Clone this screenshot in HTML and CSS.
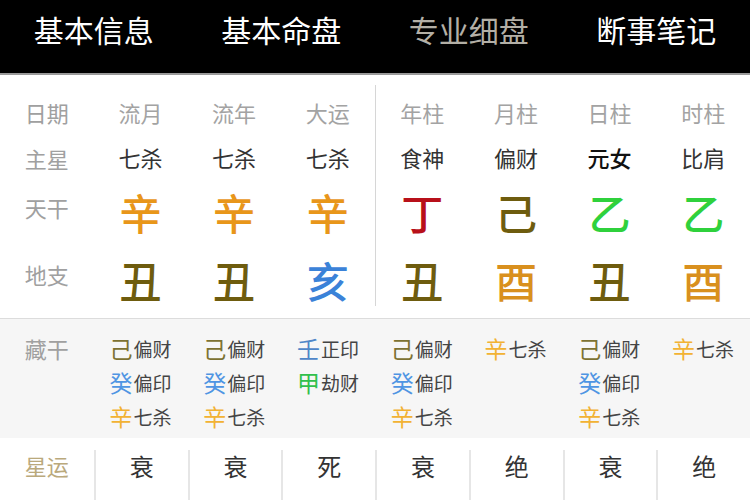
FILE: index.html
```html
<!DOCTYPE html>
<html lang="zh-CN">
<head>
    <meta charset="UTF-8">
    <meta name="viewport" content="width=device-width, initial-scale=1.0">
    <title>专业细盘</title>
    <link rel="stylesheet" href="styles.css">
</head>
<body>
    <header class="tabs">
        <div class="tab">基本信息</div>
        <div class="tab">基本命盘</div>
        <div class="tab active">专业细盘</div>
        <div class="tab">断事笔记</div>
    </header>

    <section class="pillars">
        <div class="half left">
            <div class="cell head label">日期</div>
            <div class="cell head">流月</div>
            <div class="cell head">流年</div>
            <div class="cell head">大运</div>

            <div class="cell label">主星</div>
            <div class="cell star">七杀</div>
            <div class="cell star">七杀</div>
            <div class="cell star">七杀</div>

            <div class="cell label stem-label">天干</div>
            <div class="cell big orange">辛</div>
            <div class="cell big orange">辛</div>
            <div class="cell big orange">辛</div>

            <div class="cell label branch-label">地支</div>
            <div class="cell big olive branch">丑</div>
            <div class="cell big olive branch">丑</div>
            <div class="cell big blue branch">亥</div>
        </div>
        <div class="half right">
            <div class="cell head">年柱</div>
            <div class="cell head">月柱</div>
            <div class="cell head">日柱</div>
            <div class="cell head">时柱</div>

            <div class="cell star">食神</div>
            <div class="cell star">偏财</div>
            <div class="cell star self">元女</div>
            <div class="cell star">比肩</div>

            <div class="cell big red">丁</div>
            <div class="cell big olive">己</div>
            <div class="cell big green">乙</div>
            <div class="cell big green">乙</div>

            <div class="cell big olive branch">丑</div>
            <div class="cell big orange branch">酉</div>
            <div class="cell big olive branch">丑</div>
            <div class="cell big orange branch">酉</div>
        </div>
    </section>

    <section class="hidden">
        <div class="col label">藏干</div>
        <div class="col">
            <div class="item"><span class="gan olive">己</span>偏财</div>
            <div class="item"><span class="gan blue">癸</span>偏印</div>
            <div class="item"><span class="gan yellow">辛</span>七杀</div>
        </div>
        <div class="col">
            <div class="item"><span class="gan olive">己</span>偏财</div>
            <div class="item"><span class="gan blue">癸</span>偏印</div>
            <div class="item"><span class="gan yellow">辛</span>七杀</div>
        </div>
        <div class="col">
            <div class="item"><span class="gan steel">壬</span>正印</div>
            <div class="item"><span class="gan green">甲</span>劫财</div>
        </div>
        <div class="col">
            <div class="item"><span class="gan olive">己</span>偏财</div>
            <div class="item"><span class="gan blue">癸</span>偏印</div>
            <div class="item"><span class="gan yellow">辛</span>七杀</div>
        </div>
        <div class="col">
            <div class="item"><span class="gan yellow">辛</span>七杀</div>
        </div>
        <div class="col">
            <div class="item"><span class="gan olive">己</span>偏财</div>
            <div class="item"><span class="gan blue">癸</span>偏印</div>
            <div class="item"><span class="gan yellow">辛</span>七杀</div>
        </div>
        <div class="col">
            <div class="item"><span class="gan yellow">辛</span>七杀</div>
        </div>
    </section>

    <section class="luck">
        <div class="slot label">星运</div>
        <div class="slot">衰</div>
        <div class="slot">衰</div>
        <div class="slot">死</div>
        <div class="slot">衰</div>
        <div class="slot">绝</div>
        <div class="slot">衰</div>
        <div class="slot">绝</div>
    </section>
</body>
</html>
```

FILE: styles.css
```css
body {
    margin: 0;
    font-family: "Noto Sans CJK SC", "Noto Sans", sans-serif;
    background-color: #fff;
    color: #333;
    overflow: hidden;
}

/* top tab bar */
.tabs {
    display: flex;
    height: 73px;
    background-color: #000;
    border-bottom: 2px solid #9a9a9a;
}

.tab {
    flex: 1;
    display: flex;
    justify-content: center;
    align-items: center;
    padding-bottom: 15px;
    font-size: 30px;
    color: #fff;
}

.tab.active {
    color: #b3afa6;
}

/* four pillars table */
.pillars {
    display: flex;
    padding: 10px 0 12px;
    border-bottom: 1px solid #dcdcdc;
}

.half {
    flex: 1;
    display: grid;
    grid-template-columns: repeat(4, 1fr);
    grid-template-rows: 51px 44px 66px 60px;
}

.half.left {
    border-right: 1px solid #d6d6d6;
}

.cell {
    display: flex;
    justify-content: center;
    align-items: center;
    font-size: 22px;
}

.cell.head {
    color: #a3a3a3;
    padding-top: 3px;
}

.cell.label {
    color: #a0a0a0;
}

.cell.star {
    color: #333;
    padding-bottom: 2px;
}

.cell.star.self {
    color: #111;
    font-weight: 500;
}

.cell.stem-label {
    align-items: flex-start;
    padding-top: 11px;
}

.cell.branch-label {
    align-items: flex-start;
    padding-top: 12px;
}

.cell.big {
    font-size: 42px;
    font-weight: 500;
    padding-bottom: 3px;
}

.cell.branch {
    padding-top: 6px;
    padding-bottom: 0;
}

.orange { color: #e8961a; }
.olive { color: #6e5c0e; }
.blue { color: #3b82d8; }
.red { color: #b8101a; }
.green { color: #2fd13c; }

.cell.branch.orange { color: #d9901e; }

/* hidden stems */
.hidden {
    display: grid;
    grid-template-columns: repeat(8, 1fr);
    padding: 12px 0 5px;
    background-color: #f6f6f6;
    height: 102px;
}

.col {
    display: flex;
    flex-direction: column;
    align-items: center;
}

.col.label {
    font-size: 22px;
    color: #a0a0a0;
    line-height: 34px;
}

.item {
    height: 34px;
    display: flex;
    align-items: center;
    font-size: 19px;
    color: #444;
}

.gan {
    font-size: 23px;
    margin-right: 1px;
}

.gan.olive { color: #7d7232; }
.gan.blue { color: #4f95e3; }
.gan.yellow { color: #f2b233; }
.gan.steel { color: #4f86c8; }
.gan.green { color: #31c04c; }

/* star luck row */
.luck {
    display: grid;
    grid-template-columns: repeat(8, 1fr);
    padding-top: 12px;
}

.slot {
    display: flex;
    justify-content: center;
    align-items: center;
    height: 30px;
    padding-bottom: 20px;
    font-size: 24px;
    color: #333;
    border-left: 2px solid #e6e6e6;
}

.slot.label {
    border-left: none;
    font-size: 22px;
    color: #baa97c;
}
```
